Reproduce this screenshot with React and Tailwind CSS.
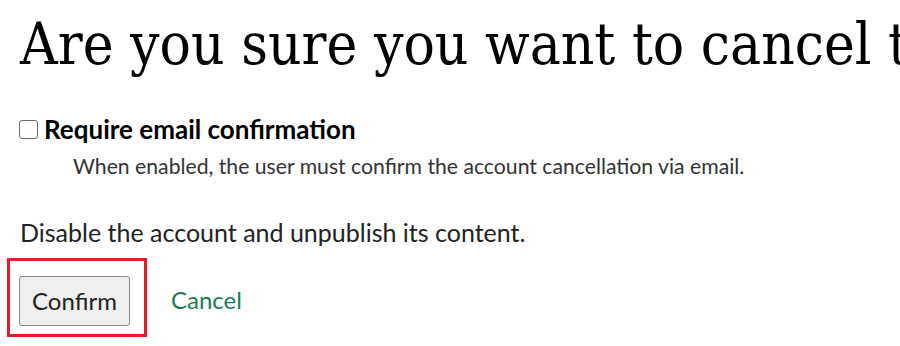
export default function App() {
  return (
    <div className="min-h-screen overflow-hidden bg-white px-[20px] pt-[15px] font-['Lato',sans-serif] text-[#222]">
      <h1 className="whitespace-nowrap font-['DejaVu_Serif',serif] text-[58px] font-normal leading-none text-black [font-stretch:condensed]">
        Are you sure you want to cancel these accounts?
      </h1>

      <div className="mt-[41px]">
        <label className="-ml-[1px] flex items-center gap-[6px]">
          <input
            type="checkbox"
            className="h-[19px] w-[19px] appearance-none rounded-[3px] border-[1.5px] border-[#6b6b6b] bg-white"
          />
          <span className="text-[26px] font-bold leading-[30px] text-black">Require email confirmation</span>
        </label>
        <p className="mt-[9px] pl-[53px] text-[21.2px] leading-[26px] text-[#333]">
          When enabled, the user must confirm the account cancellation via email.
        </p>
      </div>

      <p className="mt-[38px] text-[25px] leading-[30px]">Disable the account and unpublish its content.</p>

      <div className="mt-[11px] flex items-center gap-[24px]">
        <div className="-ml-[13px] border-[3px] border-[#e21f26] pb-[8px] pl-[9px] pr-[14px] pt-[15px]">
          <button className="h-[50px] w-[111px] rounded-[3px] border border-[#8a8a8a] bg-[#efefef] text-[24px] text-[#222]">
            Confirm
          </button>
        </div>
        <a href="#" className="pt-[4px] text-[24px] text-[#1a7c55]">Cancel</a>
      </div>
    </div>
  );
}
